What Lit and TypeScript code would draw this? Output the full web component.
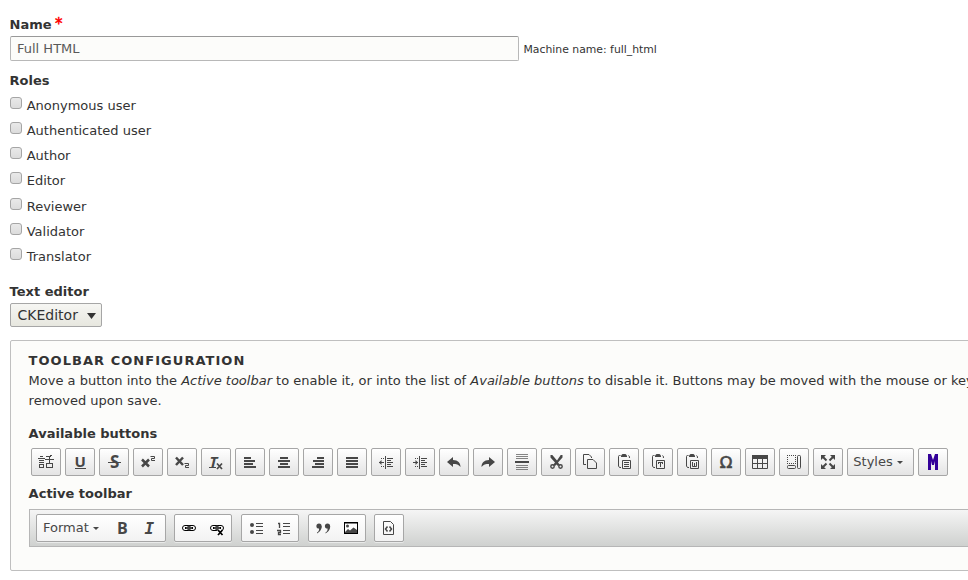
import { LitElement, html, svg, css } from "lit";
import { customElement, property } from "lit/decorators.js";

const bars = (rows: number[][]) => svg`${rows.map(([x, y, w, h = 1]) => svg`<rect x=${x} y=${y} width=${w} height=${h}></rect>`)}`;
const line = (d: string, w = 1) => svg`<path d=${d} fill="none" stroke="currentColor" stroke-width=${w}></path>`;
const solid = (d: string) => svg`<path d=${d}></path>`;

const clipboard = svg`${line("M4.500 1.500H3.500Q2.500 1.500 2.500 2.500V12L3.500 13.500H5M12.500 1.500Q13.500 1.500 13.500 4")}
  ${solid("M5 3V1.500L6.500 0H9.500L11 1.500V3Z")}
  ${line("M6.500 6.500H14.500V14.500H6.500Z")}`;
const chain = svg`
  <rect x="1.500" y="5.500" width="8" height="5" rx="2.500" fill="#fff" stroke="#000"></rect>
  <rect x="6.500" y="5.500" width="8" height="5" rx="2.500" fill="none" stroke="#000"></rect>
  <rect x="4" y="7" width="8" height="2" fill="#000"></rect>
  <rect x="5" y="7.700" width="6" height=".6" fill="#ddd"></rect>`;
const dedentLines = [[7, 2, 1, 13], [9, 4, 6], [9, 6, 4], [9, 8, 6], [9, 10, 4], [9, 12, 6], [3, 4, 1], [5, 4, 1], [3, 12, 1], [5, 12, 1]];

const icons: Record<string, unknown> = {
  language: bars([[2, 2, 3], [0, 4, 7], [1, 6, 5], [1, 8, 5], [1, 10, 5], [1, 13, 5], [1, 10, 1, 4], [5, 10, 1, 4],
    [12, 1, 2], [8, 2, 5], [11, 2, 1, 7], [7, 5, 9], [8, 9, 7], [8, 13, 7], [8, 9, 1, 5], [14, 9, 1, 5]]),
  underline: svg`<text class="b" x="2.400" y="12.500" font-size="15">U</text>${bars([[3, 14, 11]])}`,
  strike: svg`<text class="b" x="4" y="14" font-size="17">S</text>${bars([[2, 8, 13]])}`,
  sup: svg`${line("M2 5.500L9 12.500M9 5.500L2 12.500", 2.5)}${line("M10.500 2.500H14.500V4.500H11.500V6.500H15")}`,
  sub: svg`${line("M2 3.500L9 11M9 3.500L2 11", 2.5)}${line("M10.500 9.500H14.500V11.500H11.500V13.500H15")}`,
  clear: svg`<text class="b i" x="1.500" y="12.500" font-size="15">T</text>${bars([[1, 13, 7]])}${line("M9 9.500L14 15M14 9.500L9 15", 1.7)}`,
  left: bars([[2, 3, 7, 2], [2, 6, 11, 2], [2, 9, 9, 2], [2, 12, 12, 2]]),
  center: bars([[4, 3, 8, 2], [2, 6, 12, 2], [4, 9, 8, 2], [2, 12, 12, 2]]),
  right: bars([[7, 3, 7, 2], [3, 6, 11, 2], [5, 9, 9, 2], [2, 12, 12, 2]]),
  justify: bars([[2, 3, 12, 2], [2, 6, 12, 2], [2, 9, 12, 2], [2, 12, 12, 2]]),
  outdent: svg`${bars([...dedentLines, [1, 8, 5]])}${solid("M3.500 6V11L1 8.500Z")}`,
  indent: svg`${bars([...dedentLines, [1, 8, 5]])}${solid("M3.500 6V11L6 8.500Z")}`,
  undo: solid("M1 8L7 3V6C12 6 14.500 9 14.500 13C12.500 10.500 10.500 10 7 10V13Z"),
  redo: solid("M15 8L9 3V6C4 6 1.500 9 1.500 13C3.500 10.500 5.500 10 9 10V13Z"),
  hr: svg`<g opacity=".65">${bars([[2, 0, 12], [2, 2, 12], [2, 4, 12], [2, 11, 12], [2, 13, 12], [2, 15, 12]])}</g>${bars([[1, 7, 14, 2]])}`,
  cut: svg`${solid("M2.500 1L4.300 1L9 6.500L12.700 1H14.500V3.500L10 8.500L12 11L10 12L8.500 10.500L7 12L5 11L7 8.500L2.500 3.500Z")}
    <circle cx="4.500" cy="12.500" r="1.700" fill="none" stroke="currentColor" stroke-width="1.400"></circle>
    <circle cx="12.500" cy="12.500" r="1.700" fill="none" stroke="currentColor" stroke-width="1.400"></circle>`,
  copy: line("M4 10.500H1.500V.5H7L9.500 3V4M5.500 5.500H11L14.500 9V14.500H5.500Z"),
  paste: svg`${clipboard}${bars([[8, 8, 5], [8, 10, 5], [8, 12, 5]])}`,
  pasteText: svg`${clipboard}${bars([[8, 8, 5], [10, 8, 1, 5], [8, 8, 1, 2], [12, 8, 1, 2]])}`,
  pasteWord: svg`${clipboard}${line("M8.500 8V12.500H12.500V8M10.500 9V12")}`,
  omega: svg`<text class="dv" x="1.700" y="14" font-size="16.500" stroke="currentColor" stroke-width=".6">Ω</text>`,
  table: svg`${bars([[0, 1, 16, 4]])}${line("M.5 2V14.500H15.500V2M0 9.500H16M5.500 5V14M10.500 5V14")}`,
  blocks: svg`<path d="M1.500 1V10.500M1 1.500H10M9.500 1V10.500M1 9.500H10" fill="none" stroke="currentColor" stroke-dasharray="1 1"></path>
    <rect x="1.500" y="11.500" width="8" height="3" rx="1" fill="none" stroke="currentColor"></rect>
    <rect x="11.500" y="1.500" width="3" height="13" rx="1" fill="none" stroke="currentColor"></rect>`,
  maximize: svg`${solid("M1 1H6L1 6ZM15 1H10L15 6ZM1 15H6L1 10ZM15 15H10L15 10Z")}${line("M3 3L6.500 6.500M13 3L9.500 6.500M3 13L6.500 9.500M13 13L9.500 9.500", 2)}`,
  media: svg`<path fill="#309" d="M3 0H6L8 6L10 0H13V16H10V7L9 11H7L6 7V16H3Z"></path>`,
  bold: svg`<text class="b" x="3" y="14" font-size="16">B</text>`,
  italic: svg`<text class="b i serif" x="3.500" y="14" font-size="16">I</text>`,
  link: chain,
  unlink: svg`${chain}<path d="M9 10L13.500 15M13.500 10L9 15" stroke="#fff" stroke-width="3.500"></path>
    <path d="M9 10L13.500 15M13.500 10L9 15" stroke="#000" stroke-width="1.800"></path>`,
  bullets: svg`<circle cx="4" cy="5" r="2"></circle><circle cx="4" cy="12" r="2"></circle>${bars([[8, 3, 7], [8, 6, 7], [8, 10, 7], [8, 13, 7]])}`,
  numbers: svg`${line("M2 3.500H3.500V8M1 10.500H4.500V12.500H2.500V14.500H5", 1.3)}${bars([[7, 3, 7], [7, 6, 7], [7, 10, 7], [7, 13, 7]])}`,
  quote: svg`<circle cx="4" cy="6" r="2.600"></circle><circle cx="12.500" cy="6" r="2.600"></circle>
    ${solid("M6.600 6C7 9 5 12 2 13.500V12.500Q4.500 11 4 8ZM15.100 6C15.500 9 13.500 12 10.500 13.500V12.500Q13 11 12.500 8Z")}`,
  image: svg`<rect x="1.500" y="2.500" width="13" height="11" fill="#fff" stroke="#000"></rect><rect x="1" y="2" width="14" height="1.500" fill="#000"></rect>
    <circle cx="4.500" cy="6" r="1.500"></circle>${solid("M2 12L5 9L7 10.500L10.500 7.500L14 10V13H2Z")}`,
  source: svg`${line("M2.500 1.500H9.500L12.500 4.500V14.500H2.500Z")}${line("M6.500 6.500L4.500 9L6.500 11.500M8.500 6.500L10.500 9L8.500 11.500", 1.5)}`,
};

@customElement("editor-icon")
class EditorIcon extends LitElement {
  @property() name = "";
  static styles = css`
    :host { display: block; flex: none; width: 16px; height: 16px; color: #474747; }
    svg { display: block; overflow: visible; fill: currentColor; }
    .b { font-family: "Open Sans", sans-serif; font-weight: 700; }
    .i { font-style: italic; }
    .dv { font-family: "DejaVu Sans", sans-serif; }
    .serif { font-family: "DejaVu Sans Mono", monospace; }
  `;
  render() {
    return html`<svg width="16" height="16" viewBox="0 0 16 16">${icons[this.name]}</svg>`;
  }
}

@customElement("app-root")
class AppRoot extends LitElement {
  static styles = css`
    :host { display: block; width: 968px; height: 580px; overflow: hidden; background: #fff; color: #333; font: 13px/20px "DejaVu Sans", sans-serif; }
    * { box-sizing: border-box; }
    .page { padding: 15px 0 0 10px; }
    .label { display: block; font-weight: 700; line-height: 20px; height: 20px; margin-left: -.4px; }
    .req { color: #f00; font-size: 15px; font-weight: 400; margin-left: 3.400px; line-height: 1; -webkit-text-stroke: .5px #f00; }
    .row { display: flex; align-items: center; height: 25px; margin-top: 1px; }
    .input { width: 509px; height: 25px; border: 1px solid #b8b8b8; border-top-color: #999; border-radius: 2px; background: #fcfcfa; color: #595959; font: 13px "DejaVu Sans", sans-serif; padding: 0 6px; outline: none; }
    .machine { font-size: 10.830px; margin-left: 4.500px; padding-top: 2px; }
    .roles-label { margin-top: 10px; }
    .roles { display: grid; grid-auto-rows: 25.170px; margin-top: 1px; }
    .role { display: flex; align-items: flex-start; line-height: 27px; }
    .check { width: 12px; height: 12px; margin: 5px 4.700px 0 0; border: 1px solid #a5a5a5; border-radius: 3px; background: linear-gradient(#e9e9e9, #dcdcdc); }
    .editor-label { margin-top: 14px; }
    .select { display: flex; align-items: center; justify-content: space-between; width: 92px; height: 24px; margin-top: 1px; padding: 0 5px 0 6.500px; border: 1px solid #a6a6a6; border-radius: 2px; background: linear-gradient(#f6f6f3, #e7e7df); font-size: 14px; }
    .select svg { fill: #333; display: block; margin-top: 1px; }
    .panel { width: 1100px; height: 231px; margin-top: 13px; padding: 10px 18px; border: 1px solid #bfbfbf; border-radius: 2px; background: #fcfcfa; }
    .title { font-weight: 700; letter-spacing: 1.040px; text-transform: uppercase; height: 20px; white-space: nowrap; margin-left: -.4px; }
    .desc { white-space: nowrap; height: 40px; margin-left: -.4px; }
    .avail { margin-top: 13px; }
    .buttons { display: flex; gap: 4px; margin: 4px 0 0 2px; }
    .btn, .group { display: flex; align-items: center; height: 28px; border: 1px solid #a6a6a6; border-radius: 2px; background: linear-gradient(#fff, #e4e4e4); }
    .btn { width: 30px; justify-content: center; }
    .styles { width: 67px; justify-content: flex-start; padding-left: 5.300px; }
    .combo { display: flex; align-items: center; gap: 4px; color: #474747; line-height: 26px; }
    .combo::after { content: ""; border: 3px solid transparent; border-top-color: #474747; border-bottom: 0; margin-top: 1px; }
    .active { margin-top: 8px; }
    .toolbar { display: flex; gap: 9px; height: 38px; margin-top: 5px; padding: 4px 6px; border: 1px solid #b6b6b6; background: linear-gradient(#f5f5f5, #cfd1cf); }
    .group { padding: 0 6px; gap: 12px; box-shadow: 0 1px 0 rgba(255,255,255,.5); background: linear-gradient(#fff, #f2f2f2); }
    .group:not(.format):not(:last-child) { width: 58px; }
    .format { width: 130px; padding-left: 6px; gap: 11px; margin-right: -1px; }
    .group:nth-child(4) { margin-right: -1px; }
    .format .combo { margin-right: 4px; }
  `;
  render() {
    const roles = ["Anonymous user", "Authenticated user", "Author", "Editor", "Reviewer", "Validator", "Translator"];
    const available = ["language", "underline", "strike", "sup", "sub", "clear", "left", "center", "right", "justify", "outdent", "indent", "undo", "redo", "hr", "cut", "copy", "paste", "pasteText", "pasteWord", "omega", "table", "blocks", "maximize"];
    const groups = [["link", "unlink"], ["bullets", "numbers"], ["quote", "image"], ["source"]];
    const icon = (n: string) => html`<editor-icon name=${n}></editor-icon>`;
    return html`<div class="page">
      <label class="label">Name<span class="req">*</span></label>
      <div class="row"><input class="input" .value=${"Full HTML"}><span class="machine">Machine name: full_html</span></div>
      <span class="label roles-label">Roles</span>
      <div class="roles">${roles.map((r) => html`<label class="role"><span class="check"></span>${r}</label>`)}</div>
      <span class="label editor-label">Text editor</span>
      <div class="select"><span>CKEditor</span><svg width="9" height="6"><path d="M0 0H9L4.500 6Z"></path></svg></div>
      <section class="panel">
        <div class="title">Toolbar configuration</div>
        <div class="desc">Move a button into the <em>Active toolbar</em> to enable it, or into the list of <em>Available buttons</em> to disable it. Buttons may be moved with the mouse or keyboard<br>removed upon save.</div>
        <span class="label avail">Available buttons</span>
        <div class="buttons">
          ${available.map((n) => html`<div class="btn">${icon(n)}</div>`)}
          <div class="btn styles"><span class="combo">Styles</span></div>
          <div class="btn">${icon("media")}</div>
        </div>
        <span class="label active">Active toolbar</span>
        <div class="toolbar">
          <div class="group format"><span class="combo">Format</span>${icon("bold")}${icon("italic")}</div>
          ${groups.map((g) => html`<div class="group">${g.map(icon)}</div>`)}
        </div>
      </section>
    </div>`;
  }
}
